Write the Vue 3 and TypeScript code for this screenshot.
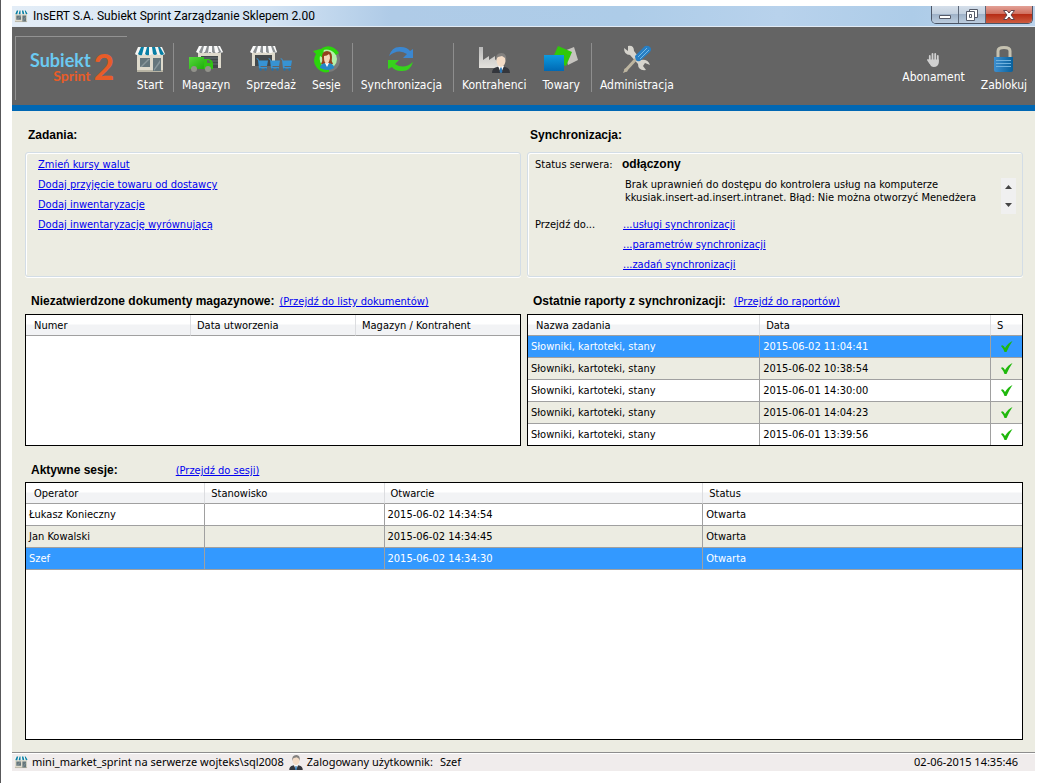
<script setup lang="ts">
interface Tool {
  id: string
  label: string
  w: number
  h: number
}

interface Report {
  name: string
  date: string
}

interface Session {
  operator: string
  station: string
  opened: string
  status: string
}

const toolGroups: Tool[][] = [
  [{ id: 'shop', label: 'Start', w: 30, h: 26 }],
  [
    { id: 'truck', label: 'Magazyn', w: 34, h: 26 },
    { id: 'carts', label: 'Sprzedaż', w: 42, h: 26 },
    { id: 'session', label: 'Sesje', w: 27, h: 27 },
  ],
  [{ id: 'sync', label: 'Synchronizacja', w: 26, h: 26 }],
  [
    { id: 'partner', label: 'Kontrahenci', w: 32, h: 28 },
    { id: 'goods', label: 'Towary', w: 34, h: 26 },
  ],
  [{ id: 'tools', label: 'Administracja', w: 28, h: 28 }],
]

const tasks: string[] = [
  'Zmień kursy walut',
  'Dodaj przyjęcie towaru od dostawcy',
  'Dodaj inwentaryzacje',
  'Dodaj inwentaryzację wyrównującą',
]

const syncLinks: string[] = [
  '...usługi synchronizacji',
  '...parametrów synchronizacji',
  '...zadań synchronizacji',
]

const reports: Report[] = [
  { name: 'Słowniki, kartoteki, stany', date: '2015-06-02 11:04:41' },
  { name: 'Słowniki, kartoteki, stany', date: '2015-06-02 10:38:54' },
  { name: 'Słowniki, kartoteki, stany', date: '2015-06-01 14:30:00' },
  { name: 'Słowniki, kartoteki, stany', date: '2015-06-01 14:04:23' },
  { name: 'Słowniki, kartoteki, stany', date: '2015-06-01 13:39:56' },
]

const sessions: Session[] = [
  { operator: 'Łukasz Konieczny', station: '', opened: '2015-06-02 14:34:54', status: 'Otwarta' },
  { operator: 'Jan Kowalski', station: '', opened: '2015-06-02 14:34:45', status: 'Otwarta' },
  { operator: 'Szef', station: '', opened: '2015-06-02 14:34:30', status: 'Otwarta' },
]
</script>

<template>
  <svg class="sprite" aria-hidden="true">
    <defs>
      <linearGradient id="g-blue" x1="0" y1="0" x2="0" y2="1">
        <stop offset="0" stop-color="#0c9be0" />
        <stop offset="1" stop-color="#0069b4" />
      </linearGradient>
      <linearGradient id="g-lock" x1="0" y1="0" x2="1" y2="0">
        <stop offset="0" stop-color="#3d8fd0" />
        <stop offset="1" stop-color="#07609c" />
      </linearGradient>
      <linearGradient id="g-green" x1="0" y1="0" x2="1" y2="1">
        <stop offset="0" stop-color="#55d83c" />
        <stop offset="1" stop-color="#1fae0c" />
      </linearGradient>
      <linearGradient id="g-factory" x1="0" y1="0" x2="0" y2="1">
        <stop offset="0" stop-color="#b9b9b9" />
        <stop offset="1" stop-color="#e4e2dd" />
      </linearGradient>
      <symbol id="person" viewBox="0 0 18 20">
        <path d="M0 20q0-5 5-6l4-1 4 1q5 1 5 6z" fill="#34363c" />
        <path d="M6 13l3 7 3-7-3-1z" fill="#fff" />
        <path d="M8.300 14.500h1.400l.6 4.500-1.300 1-1.300-1z" fill="#2a78b8" />
        <path d="M4.500 5q0-3 4.500-3t4.500 3v3q-.5 5-4.500 6-4-1-4.500-6z" fill="#f4dcc6" />
        <path d="M4 8Q3 0 9.500 0 15 0 14 8l-1-3-3-2-4 1-1 1z" fill="#83817f" />
      </symbol>
      <symbol id="cart" viewBox="0 0 12 13">
        <path d="M0 .5h2l1 2h9l-1 5.500H4.500V9H11v1.500H3L2 2z" fill="#3793d3" />
        <circle cx="4.500" cy="11.500" r="1.200" fill="#2471a8" />
        <circle cx="9.500" cy="11.500" r="1.200" fill="#2471a8" />
      </symbol>
      <symbol id="shop" viewBox="0 0 30 26">
        <path d="M2 8h26v17H2z" fill="#dedacc" />
        <path d="M2 24h26v2H2z" fill="#b8b4a4" />
        <path d="M5 12h10v9H5zM18 12h8v13h-8z" fill="#65767c" />
        <path d="M6 20l7-7h2l-8 8H5zM19 23l6-9v3l-6 8z" fill="#8a989c" />
        <path d="M3 1h24l3 7q-2 2-4 0-2 2-4 0-2 2-5 0-2 2-4 0-2 2-4 0-2 2-5 0-2 2-4 0z" fill="#f5f5f2" />
        <path d="M6 1h3L7 9Q5 10 3 8zM12 1h2l0 8q-2 1-4-1zM17 1h3l2 7q-2 2-4 0zM23 1h2l4 7q-2 2-4 0z" fill="#087fa5" />
      </symbol>
      <symbol id="truck" viewBox="0 0 34 26">
        <path d="M9 7h23v15H9z" fill="#dedacc" />
        <path d="M12 10h17v12H12z" fill="#43484b" />
        <path d="M12 12h17M12 15h17M12 18h17" stroke="#667074" />
        <path d="M10 0h21l3 6q-2 2-4 0-2 2-5 0-2 2-4 0-2 2-5 0-2 2-4 0-2 2-5 0z" fill="#fafafa" />
        <path d="M13 0h2l-2 7q-2 0-3-1zM18 0h2l-1 7q-2 0-3-1zM23 0h2l1 7q-2 0-3-1zM28 0h1l4 7-3-1z" fill="#8d9193" />
        <path d="M0 11h15v12H0z" fill="url(#g-green)" />
        <path d="M15 13h5q4 1 4 5v5h-9z" fill="#2fc412" />
        <path d="M18 14h2l2 3h-4z" fill="#5a6c60" />
        <circle cx="5" cy="23" r="3" fill="#92928b" />
        <circle cx="19" cy="23" r="3" fill="#92928b" />
      </symbol>
      <symbol id="carts" viewBox="0 0 42 26">
        <path d="M2 6h23v14H2z" fill="#dedacc" />
        <path d="M5 9h17v11H5z" fill="#43484b" />
        <path d="M3 0h22l2 6q-2 2-4 0-2 2-5 0-2 2-4 0-2 2-5 0-2 2-5 0-2 2-4 0z" fill="#fafafa" />
        <path d="M6 0h2L6 7q-2 0-3-1zM11 0h2v7q-2 0-3-1zM16 0h2l1 7q-2 0-3-1zM21 0h2l3 7-3-1z" fill="#8d9193" />
        <use href="#cart" x="6" y="12" width="12" height="13" />
        <use href="#cart" x="18" y="12" width="12" height="13" />
        <use href="#cart" x="30" y="12" width="12" height="13" />
      </symbol>
      <symbol id="session" viewBox="0 0 27 27">
        <circle cx="15" cy="14" r="12" fill="#7b7b7b" />
        <circle cx="14" cy="13" r="10" fill="#b5f0aa" />
        <path d="M16 26A12 12 0 013 8L0 5l11-3-1 10-3-2Q5 20 16 23z" fill="#2bd60b" />
        <path d="M9 2q10-5 17 5l-3 2Q18 2 9 4z" fill="#2bd60b" />
        <path d="M8 18q2-3 1-7 0-6 5-6t5 6q-1 4 1 7z" fill="#93401c" />
        <path d="M7 22q0-5 7-5t7 5q-6 4-14 0z" fill="#2587c8" />
        <path d="M12 17l2 4 2-4z" fill="#fff" />
        <path d="M11 10q3 0 5-2 1 1 1 4-1 5-3 6-3-1-3-6z" fill="#f6d5b8" />
      </symbol>
      <symbol id="sync" viewBox="0 0 26 26">
        <path d="M1 10Q4 0 13 1q6 0 9 4l3-2v9H15l4-4Q10 2 1 10z" fill="#3b87d0" />
        <path d="M25 16q-3 10-12 9-6 0-9-4l-4 2v-9h11l-4 4q9 6 18-2z" fill="#36d21c" />
      </symbol>
      <symbol id="partner" viewBox="0 0 32 28">
        <path d="M1 2h4v13l6-4v4l6-4v4l6-4v12H1z" fill="url(#g-factory)" />
        <use href="#person" x="14" y="8" width="18" height="20" />
      </symbol>
      <symbol id="goods" viewBox="0 0 34 26">
        <path d="M20 5l10-4 4 13-10 5z" fill="#c6c4bf" />
        <path d="M14 0l14 6-6 14-14-6z" fill="#2fc80a" />
        <path d="M0 9h20v16H0z" fill="url(#g-blue)" />
      </symbol>
      <symbol id="tools" viewBox="0 0 28 28">
        <path d="M1 3l4 3V1q6-1 6 5l7 9q7-1 9 5l-5-2-2 3 3 4q-8 1-8-6L7 10Q1 10 1 3z" fill="#d6d4cd" />
        <path d="M2 26l11-12" stroke="#bdb5a0" stroke-width="3" />
        <path d="M0 28l2-5 3 3z" fill="#bdb5a0" />
        <path d="M12 11L22 1q3-1 5 1t0 5L17 16q-3 1-4-1t-1-4z" fill="#277fc4" />
        <path d="M15 12l9-9M17 14l9-9" stroke="#74b8e6" />
      </symbol>
      <symbol id="hand" viewBox="0 0 13 14">
        <path d="M2.800 7V3M5.500 7V1M8.200 7V1M10.800 8V3M1 7l2 3" stroke="#d0d0d0" stroke-width="1.800" stroke-linecap="round" />
        <path d="M2 6.500h9.800V10q-1 4-5 4-3 0-4-3z" fill="#d0d0d0" />
      </symbol>
      <symbol id="lock" viewBox="0 0 20 26">
        <path d="M4 12V5q0-3.500 6-3.500T16 5v7" fill="none" stroke="#c5c1b0" stroke-width="3" />
        <path d="M0 11h19v13q0 2-2 2H2q-2 0-2-2z" fill="url(#g-lock)" />
        <path d="M2 14.500h15M2 17.500h15M2 20.500h15" stroke="#71b2df" />
      </symbol>
      <symbol id="check" viewBox="0 0 12 12">
        <path d="M0 5q2-2 4 2Q7 2 11.500 0 8 5 5.500 11H3.500Q2 7 0 5z" fill="#1fb80c" />
      </symbol>
    </defs>
  </svg>

  <div class="desk">
    <div class="window">
      <header class="titlebar">
        <svg class="mini" width="14" height="14" aria-hidden="true"><use href="#shop" /></svg>
        <span class="title">InsERT S.A. Subiekt Sprint Zarządzanie Sklepem 2.00</span>
        <div class="controls">
          <button type="button" class="ctl" aria-label="Minimalizuj">
            <svg width="14" height="14" viewBox="0 0 14 14"><path d="M1.500 7.500h11v3h-11z" fill="#fff" stroke="#555a68" /></svg>
          </button>
          <button type="button" class="ctl" aria-label="Przywróć">
            <svg width="14" height="14" viewBox="0 0 14 14" fill="#fff" stroke="#555a68"><path d="M4.500 1.500h8v8h-8z" /><path d="M1.500 3.500h8v9h-8z" /><path d="M4.500 6.500h2v3h-2z" /></svg>
          </button>
          <button type="button" class="ctl close" aria-label="Zamknij">
            <svg width="14" height="14" viewBox="0 0 14 14"><path d="M1.500 2.500H5L7 5l2-2.500h3.500L9 7l3.500 4.500H9L7 9l-2 2.500H1.500L5 7z" fill="#fff" stroke="#62434a" /></svg>
          </button>
        </div>
      </header>

      <nav class="toolbar">
        <div class="logo">
          <span class="words"><b class="subiekt">Subiekt</b><b class="sprint">Sprint</b></span>
          <b class="two">2</b>
        </div>
        <div v-for="(group, i) in toolGroups" :key="i" class="group">
          <button v-for="t in group" :key="t.id" type="button" class="tool">
            <span class="pic"><svg :width="t.w" :height="t.h"><use :href="'#' + t.id" /></svg></span>
            <span class="label">{{ t.label }}</span>
          </button>
        </div>
        <div class="group right">
          <button type="button" class="tool small">
            <span class="pic"><svg width="13" height="14"><use href="#hand" /></svg></span>
            <span class="label">Abonament</span>
          </button>
          <button type="button" class="tool">
            <span class="pic"><svg width="20" height="26"><use href="#lock" /></svg></span>
            <span class="label">Zablokuj</span>
          </button>
        </div>
      </nav>

      <main class="content">
        <div class="halves">
          <section>
            <h2 class="plain">Zadania:</h2>
            <div class="box">
              <ul class="tasks">
                <li v-for="t in tasks" :key="t"><a href="#">{{ t }}</a></li>
              </ul>
            </div>
          </section>
          <section>
            <h2 class="plain">Synchronizacja:</h2>
            <div class="box sync">
              <span>Status serwera:</span>
              <strong class="state">odłączony</strong>
              <div class="message">
                <p>Brak uprawnień do dostępu do kontrolera usług na komputerze kkusiak.insert-ad.insert.intranet. Błąd: Nie można otworzyć Menedżera</p>
                <div class="scroll">
                  <button type="button" aria-label="W górę"><svg width="7" height="4"><path d="M0 4l3.500-4L7 4z" fill="#444" /></svg></button>
                  <button type="button" aria-label="W dół"><svg width="7" height="4"><path d="M0 0l3.500 4L7 0z" fill="#444" /></svg></button>
                </div>
              </div>
              <span>Przejdź do...</span>
              <ul class="go">
                <li v-for="l in syncLinks" :key="l"><a href="#">{{ l }}</a></li>
              </ul>
            </div>
          </section>
        </div>

        <div class="halves">
          <section>
            <div class="heading"><h2>Niezatwierdzone dokumenty magazynowe:</h2><a href="#">(Przejdź do listy dokumentów)</a></div>
            <div class="frame short">
              <table>
                <thead>
                  <tr><th class="third">Numer</th><th class="third">Data utworzenia</th><th>Magazyn / Kontrahent</th></tr>
                </thead>
              </table>
            </div>
          </section>
          <section>
            <div class="heading wide"><h2>Ostatnie raporty z synchronizacji:</h2><a href="#">(Przejdź do raportów)</a></div>
            <div class="frame short">
              <table>
                <thead>
                  <tr><th class="c47">Nazwa zadania</th><th>Data</th><th class="flag">S</th></tr>
                </thead>
                <tbody>
                  <tr v-for="(r, i) in reports" :key="r.date" :class="{ selected: i === 0 }">
                    <td>{{ r.name }}</td>
                    <td>{{ r.date }}</td>
                    <td class="tick"><svg width="12" height="12" role="img" aria-label="OK"><use href="#check" /></svg></td>
                  </tr>
                </tbody>
              </table>
            </div>
          </section>
        </div>

        <section class="active">
          <div class="heading far"><h2>Aktywne sesje:</h2><a href="#">(Przejdź do sesji)</a></div>
          <div class="frame tall">
            <table>
              <thead>
                <tr><th class="c18">Operator</th><th class="c18">Stanowisko</th><th class="c32">Otwarcie</th><th>Status</th></tr>
              </thead>
              <tbody>
                <tr v-for="(s, i) in sessions" :key="s.operator" :class="{ selected: i === 2 }">
                  <td>{{ s.operator }}</td>
                  <td>{{ s.station }}</td>
                  <td>{{ s.opened }}</td>
                  <td>{{ s.status }}</td>
                </tr>
              </tbody>
            </table>
          </div>
        </section>
      </main>

      <footer class="status">
        <svg class="mini" width="14" height="14" aria-hidden="true"><use href="#shop" /></svg>
        <span>mini_market_sprint na serwerze wojteks\sql2008</span>
        <svg class="who" width="14" height="15" aria-hidden="true"><use href="#person" /></svg>
        <span>Zalogowany użytkownik:</span>
        <span class="user">Szef</span>
        <time class="clock">02-06-2015 14:35:46</time>
      </footer>
    </div>
  </div>
</template>

<style>
body {
  margin: 0;
  background: #fff;
}
</style>

<style scoped>
.sprite {
  position: absolute;
  width: 0;
  height: 0;
}
.desk {
  box-sizing: border-box;
  min-height: 100vh;
  padding: 6px 4px 12px 11px;
  border-left: 1px solid #58585a;
  display: flex;
  font: 11px/20px "DejaVu Sans Condensed", "DejaVu Sans", sans-serif;
  color: #000;
}
.window {
  flex: 1;
  min-width: 0;
  display: flex;
  flex-direction: column;
}
button {
  font: inherit;
  color: inherit;
  border: 0;
  padding: 0;
  background: none;
}
h2, p, ul {
  margin: 0;
  padding: 0;
  list-style: none;
}
a {
  color: #0000f0;
}
.titlebar {
  height: 20px;
  display: flex;
  align-items: center;
  padding-left: 2px;
  background: linear-gradient(90deg, #e3edf7 0, #d3e3f3 25%, #afcbe7 37%, #adcce8 60%, #b8d2ec 75%, #adcce8 88%, #bcd3ec 100%);
  border-bottom: 1px solid #e2ebf5;
  font: 12px/20px Roboto, sans-serif;
}
.title {
  margin-left: 5px;
}
.controls {
  margin: 0 2px 0 auto;
  align-self: flex-start;
  display: flex;
  height: 17px;
  border: 1px solid #4b5566;
  border-top: 0;
  border-radius: 0 0 5px 5px;
  overflow: hidden;
}
.ctl {
  width: 27px;
  display: flex;
  align-items: center;
  justify-content: center;
  border-right: 1px solid #5b6677;
  background: linear-gradient(#d5dfea 0, #c3d0df 48%, #9fb2c8 50%, #bccddf 100%);
}
.close {
  width: 46px;
  border-right: 0;
  background: linear-gradient(#e3a197 0, #d0705f 46%, #b72d16 50%, #ce5c40 100%);
}
.toolbar {
  height: 78px;
  display: flex;
  background: #646464;
  border-bottom: 6px solid #0067b3;
  color: #fff;
}
.logo {
  box-sizing: border-box;
  width: 112px;
  height: 64px;
  margin: 9px 0 0 3px;
  padding: 12px 0 0 14px;
  border: solid #929292;
  border-width: 1px 0 0 1px;
  display: flex;
  font-family: Lato, sans-serif;
}
.words {
  display: flex;
  flex-direction: column;
  align-items: flex-end;
}
.subiekt {
  font-size: 18px;
  line-height: 22px;
  color: #6bcaf2;
}
.sprint {
  font-size: 14px;
  line-height: 9px;
  color: #e85c28;
}
.two {
  margin-left: 3px;
  font-size: 36px;
  line-height: 34px;
  color: #e85c28;
}
.group {
  display: flex;
  align-items: flex-start;
  height: 49px;
  margin-top: 16px;
}
.group + .group {
  padding-right: 3px;
  border-left: 1px solid #8e8e8e;
}
.group + .right {
  margin-left: auto;
  padding-right: 0;
  border-left: 0;
}
.tool {
  padding: 0 8px;
  display: flex;
  flex-direction: column;
  align-items: center;
  font-size: 12px;
  line-height: 20px;
}
.pic {
  height: 32px;
  display: flex;
  align-items: center;
}
.small .pic {
  height: 24px;
  align-items: flex-end;
}
.content {
  flex: 1;
  display: flex;
  flex-direction: column;
  padding: 0 12px 12px 13px;
  background: #ecece2;
}
.halves {
  display: grid;
  grid-template-columns: 1fr 1fr;
  gap: 6px;
}
h2, .state {
  font: bold 12px/20px "Liberation Sans", sans-serif;
}
.state {
  line-height: 18px;
}
.plain {
  padding: 14px 0 7px 3px;
}
.box {
  box-sizing: border-box;
  height: 125px;
  border: 1px solid #d3dde6;
  border-radius: 3px;
  box-shadow: inset 1px 1px #fff, 0 1px #fff;
}
.tasks {
  padding: 2px 0 0 12px;
}
.sync {
  display: grid;
  grid-template-columns: 87px 1fr;
  grid-template-rows: 20px 40px auto;
  padding: 2px 6px 0 7px;
}
.message {
  grid-column: 2;
  display: flex;
  justify-content: space-between;
  line-height: 13px;
  padding: 3px 0 0 3px;
}
.message p {
  width: 360px;
}
.scroll {
  width: 15px;
  height: 36px;
  display: flex;
  flex-direction: column;
  background: #f0f0f0;
}
.scroll button {
  flex: 1;
  display: flex;
  align-items: center;
  justify-content: center;
}
.go {
  padding-left: 1px;
}
.heading {
  display: flex;
  gap: 5px;
  padding: 14px 0 2px 6px;
}
.heading a {
  padding-top: 1px;
}
.wide {
  gap: 8px;
}
.far {
  gap: 58px;
  padding-bottom: 1px;
}
.frame {
  box-sizing: border-box;
  border: 1px solid #000;
  background: #fff;
}
.short {
  height: 132px;
  overflow: hidden;
}
.active {
  flex: 1;
  display: flex;
  flex-direction: column;
}
.tall {
  flex: 1;
}
table {
  width: 100%;
  table-layout: fixed;
  border-collapse: separate;
  border-spacing: 0;
}
th {
  box-sizing: border-box;
  height: 21px;
  padding: 1px 0 0 6px;
  line-height: 19px;
  font-weight: normal;
  text-align: left;
  border-right: 1px solid #dcdde0;
  border-bottom: 1px solid #a0a0a0;
  background: linear-gradient(#fff 0, #fff 45%, #f2f3f5 50%, #f2f3f5 100%);
}
th:first-child {
  padding-left: 8px;
}
th:last-child {
  border-right: 0;
}
td {
  box-sizing: border-box;
  height: 22px;
  padding: 1px 0 0 3px;
  line-height: 20px;
  border-right: 1px solid #a0a0a0;
  border-bottom: 1px solid #a0a0a0;
}
td:last-child {
  border-right: 0;
}
tbody tr:nth-child(even) {
  background: #ecece2;
}
tbody tr.selected {
  background: #3399ff;
  color: #fff;
}
.c18 { width: 18%; }
.c32 { width: 32%; }
.c47 { width: 47%; }
.third { width: 165px; }
.flag { width: 31px; }
td.tick {
  padding: 0;
  text-align: center;
}
.tick svg {
  vertical-align: middle;
}
.status {
  height: 18px;
  display: flex;
  align-items: center;
  padding: 0 17px 0 2px;
  border-top: 1px solid #8d8d8d;
  box-shadow: inset 0 1px #fff;
  background: #f0ecec;
  font: 11px/18px "Noto Sans", sans-serif;
}
.status .mini {
  margin-right: 4px;
}
.who {
  margin: 0 4px 0 5px;
}
.user {
  margin-left: 7px;
}
.clock {
  margin-left: auto;
}
</style>
